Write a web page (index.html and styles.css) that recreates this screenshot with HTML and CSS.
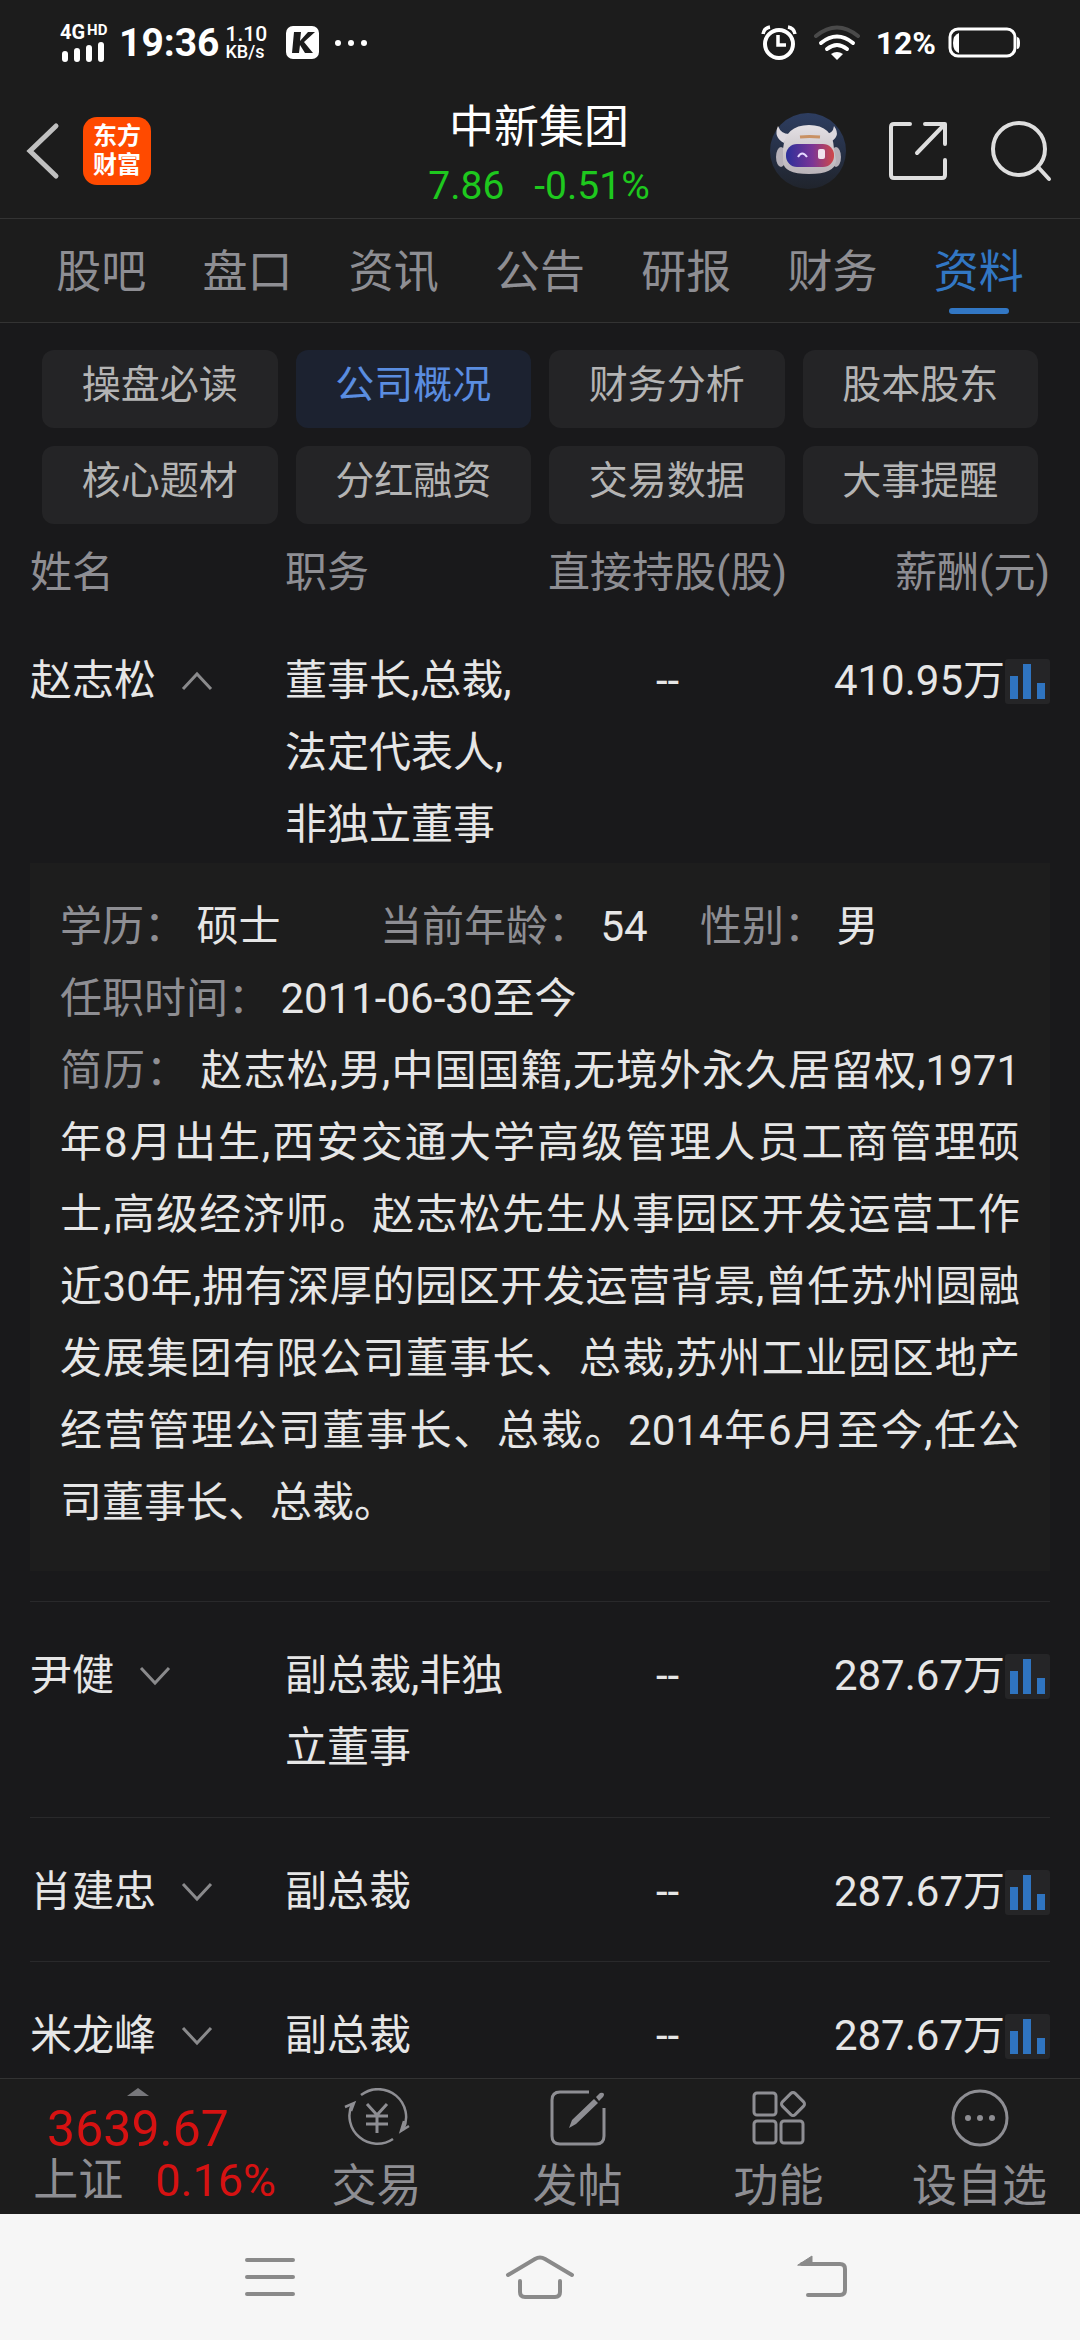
FILE: index.html
```html
<!DOCTYPE html>
<html lang="zh-CN">
<head>
<meta charset="utf-8">
<meta name="viewport" content="width=device-width, initial-scale=1">
<title>中新集团</title>
<link rel="stylesheet" href="styles.css">
</head>
<body>
<svg class="defs" aria-hidden="true">
  <symbol id="bars" viewBox="0 0 45 45">
    <rect width="45" height="45" rx="3" fill="#252527"/>
    <path d="M5 17h8v23H5zM18 5h8v35h-8zM32 24h8v16h-8z" fill="#2f74c0"/>
  </symbol>
  <symbol id="down" viewBox="0 0 32 20"><path d="M2 2l14 15L30 2" fill="none" stroke="#8a8a8c" stroke-width="3"/></symbol>
  <symbol id="up" viewBox="0 0 32 20"><path d="M2 18L16 3l14 15" fill="none" stroke="#8a8a8c" stroke-width="3"/></symbol>
</svg>
<div class="app">
  <div class="status">
    <div class="signal">
      <div class="net"><span>4G</span><span class="hd">HD</span></div>
      <svg width="44" height="20" viewBox="0 0 44 20" fill="#fff"><rect x="0" y="9" width="6" height="11" rx="3"/><rect x="12" y="6" width="6" height="14" rx="3"/><rect x="24" y="3" width="6" height="17" rx="3"/><rect x="36" y="0" width="6" height="20" rx="3"/></svg>
    </div>
    <div class="clock">19:36</div>
    <div class="speed"><span>1.10</span><span class="unit">KB/s</span></div>
    <svg class="k" width="34" height="34" viewBox="0 0 34 34"><rect width="33" height="33" rx="7" fill="#fff"/><path d="M8 6h7l-1 9 8-9h7L18 16l9 11h-8l-5-8-1 8H6z" fill="#1c1c1c"/></svg>
    <svg class="more" width="34" height="8" viewBox="0 0 34 8" fill="#fff"><circle cx="4" cy="4" r="3"/><circle cx="17" cy="4" r="3"/><circle cx="30" cy="4" r="3"/></svg>
    <div class="status-right">
      <svg width="36" height="36" viewBox="0 0 36 36" fill="none" stroke="#fff"><circle cx="18" cy="19" r="14" stroke-width="4"/><path d="M17 10v10h8" stroke-width="3.500"/><path d="M2 9q1-6 7-7M34 9q-1-6-7-7" stroke-width="3.500"/></svg>
      <svg class="wifi" width="48" height="36" viewBox="0 0 48 36" fill="none" stroke="#fff" stroke-width="4" stroke-linecap="round"><path d="M3 11q21-17 42 0" stroke="#4a4a4a"/><path d="M8 18q16-13 32 0M14 24q10-8 20 0"/><path d="M18 29q6-4 12 0l-6 6z" fill="#fff" stroke="none"/></svg>
      <div class="percent">12%</div>
      <svg width="74" height="32" viewBox="0 0 74 32"><rect x="2" y="2" width="65" height="27" rx="8" fill="none" stroke="#fff" stroke-width="3"/><path d="M11 6v20q-6-2-6-10t6-10z" fill="#fff"/><path d="M69 10q3 0 3 6t-3 6z" fill="#fff"/></svg>
    </div>
  </div>

  <header class="header">
    <div class="head-left">
      <button class="icon-btn" aria-label="返回"><svg width="34" height="58" viewBox="0 0 34 58"><path d="M30 4L4 29l26 25" fill="none" stroke="#c0c0c0" stroke-width="5" stroke-linecap="round"/></svg></button>
      <a class="logo" href="#">东方<br>财富</a>
    </div>
    <div class="head-mid">
      <h1 class="title">中新集团</h1>
      <div class="quote"><span>7.86</span><span>-0.51%</span></div>
    </div>
    <div class="head-right">
      <button class="icon-btn" aria-label="智能助手">
        <svg width="76" height="76" viewBox="0 0 76 76">
          <defs>
            <linearGradient id="night" x1="0" y1="0" x2="0" y2="1"><stop offset="0" stop-color="#2d3d60"/><stop offset="1" stop-color="#20242c"/></linearGradient>
            <linearGradient id="visor"><stop offset="0" stop-color="#2b2f9a"/><stop offset=".55" stop-color="#7a3596"/><stop offset="1" stop-color="#d04848"/></linearGradient>
            <linearGradient id="shell" x1="0" y1="0" x2="0" y2="1"><stop offset="0" stop-color="#e4e0e4"/><stop offset="1" stop-color="#b9b3b8"/></linearGradient>
          </defs>
          <circle cx="38" cy="38" r="38" fill="url(#night)"/>
          <path d="M14 30Q3 24 8 13q3 8 11 8zM58 30q14-6 6-17-1 8-9 8z" fill="#dcd8de"/>
          <ellipse cx="11" cy="44" rx="5" ry="10" fill="#b5b0b8"/><ellipse cx="66" cy="44" rx="5" ry="10" fill="#b5b0b8"/>
          <path d="M13 36Q15 12 39 12t25 24l2 12q-1 13-27 13T13 48z" fill="url(#shell)"/>
          <path d="M30 24q9-1 20 0" stroke="#c99163" stroke-width="3" fill="none"/>
          <rect x="16" y="31" width="48" height="23" rx="11" fill="url(#visor)"/>
          <path d="M28 44q4-7 9 0" fill="none" stroke="#e6d9ff" stroke-width="2"/><rect x="48" y="36" width="7" height="10" rx="2" fill="#f0e2ee"/>
        </svg>
      </button>
      <button class="icon-btn" aria-label="分享"><svg width="60" height="62" viewBox="0 0 60 62" fill="none" stroke="#dedede" stroke-width="4" stroke-linecap="round" stroke-linejoin="round"><path d="M22 4H6q-3 0-3 3v48q0 3 3 3h48q3 0 3-3V40M37 4h20v20M56 5L29 33"/></svg></button>
      <button class="icon-btn" aria-label="搜索"><svg width="62" height="62" viewBox="0 0 62 62" fill="none" stroke="#dedede" stroke-width="4" stroke-linecap="round"><circle cx="29" cy="29" r="26"/><path d="M48 47l11 12"/></svg></button>
    </div>
  </header>

  <nav class="tabs">
    <a href="#">股吧</a><a href="#">盘口</a><a href="#">资讯</a><a href="#">公告</a><a href="#">研报</a><a href="#">财务</a><a href="#" class="on">资料</a>
  </nav>

  <main class="content">
    <div class="chips">
      <button class="chip">操盘必读</button><button class="chip on">公司概况</button><button class="chip">财务分析</button><button class="chip">股本股东</button>
      <button class="chip">核心题材</button><button class="chip">分红融资</button><button class="chip">交易数据</button><button class="chip">大事提醒</button>
    </div>
    <table class="people">
      <thead>
        <tr><th>姓名</th><th>职务</th><th class="mid">直接持股(股)</th><th class="end">薪酬(元)</th></tr>
      </thead>
      <tbody>
        <tr class="open"><td><span class="cell">赵志松<svg class="arrow"><use href="#up"/></svg></span></td><td>董事长,总裁,法定代表人,非独立董事</td><td class="mid">--</td><td class="end"><span class="cell pay">410.95万<svg class="chart"><use href="#bars"/></svg></span></td></tr>
        <tr class="detail"><td colspan="4">
          <div class="card">
            <div class="facts"><span><b>学历：</b> 硕士</span><span><b>当前年龄：</b> 54</span><span><b>性别：</b> 男</span></div>
            <div><b>任职时间：</b> 2011-06-30至今</div>
            <p class="resume"><b>简历：</b> 赵志松,男,中国国籍,无境外永久居留权,1971年8月出生,西安交通大学高级管理人员工商管理硕士,高级经济师。赵志松先生从事园区开发运营工作近30年,拥有深厚的园区开发运营背景,曾任苏州圆融发展集团有限公司董事长、总裁,苏州工业园区地产经营管理公司董事长、总裁。2014年6月至今,任公司董事长、总裁。</p>
          </div>
        </td></tr>
        <tr><td><span class="cell">尹健<svg class="arrow"><use href="#down"/></svg></span></td><td>副总裁,非独立董事</td><td class="mid">--</td><td class="end"><span class="cell pay">287.67万<svg class="chart"><use href="#bars"/></svg></span></td></tr>
        <tr><td><span class="cell">肖建忠<svg class="arrow"><use href="#down"/></svg></span></td><td>副总裁</td><td class="mid">--</td><td class="end"><span class="cell pay">287.67万<svg class="chart"><use href="#bars"/></svg></span></td></tr>
        <tr><td><span class="cell">米龙峰<svg class="arrow"><use href="#down"/></svg></span></td><td>副总裁</td><td class="mid">--</td><td class="end"><span class="cell pay">287.67万<svg class="chart"><use href="#bars"/></svg></span></td></tr>
      </tbody>
    </table>
  </main>

  <footer class="toolbar">
    <a class="index" href="#">
      <svg width="22" height="8" viewBox="0 0 22 8"><path d="M0 8L11 0l11 8z" fill="#77777b"/></svg>
      <span class="points">3639.67</span>
      <span class="change"><span class="market">上证</span><span>0.16%</span></span>
    </a>
    <a class="tool" href="#"><svg width="66" height="60" viewBox="0 0 66 60" fill="none" stroke="#8e8e93" stroke-width="2.500"><path d="M17 7A28 28 0 0 1 59 42M49 51A28 28 0 0 1 8 16"/><path d="M1 19l9-4-3 8M65 38l-8 5 3-10"/><path d="M23 16l10 11 10-11M33 27v18M22 28h22M22 36h22" stroke-width="3"/></svg>交易</a>
    <a class="tool" href="#"><svg width="56" height="60" viewBox="0 0 56 60" fill="none" stroke="#8e8e93" stroke-width="3"><path d="M39 4H10q-8 0-8 8v36q0 8 8 8h36q8 0 8-8V20"/><path d="M19 40l3-8L44 11l4 4-22 21zM46 9l4-4q3-1 4 1 0 2-1 3l-4 4z" fill="#8e8e93" stroke="none"/></svg>发帖</a>
    <a class="tool" href="#"><svg width="54" height="60" viewBox="0 0 54 60" fill="none" stroke="#8e8e93" stroke-width="3"><rect x="2" y="5" width="22" height="22" rx="3"/><rect x="2" y="33" width="22" height="22" rx="3"/><rect x="29" y="33" width="22" height="22" rx="3"/><rect x="32" y="7" width="18" height="18" rx="3" transform="rotate(45 41 16)"/></svg>功能</a>
    <a class="tool" href="#"><svg width="58" height="60" viewBox="0 0 58 60"><circle cx="29" cy="30" r="27" fill="none" stroke="#8e8e93" stroke-width="3"/><g fill="#8e8e93"><circle cx="17" cy="30" r="3"/><circle cx="29" cy="30" r="3"/><circle cx="41" cy="30" r="3"/></g></svg>设自选</a>
  </footer>

  <nav class="system">
    <button class="icon-btn" aria-label="菜单"><svg width="52" height="44" viewBox="0 0 52 44" stroke="#8a8a8a" stroke-width="4" stroke-linecap="round"><path d="M3 5h46M3 22h46M3 39h46"/></svg></button>
    <button class="icon-btn" aria-label="主页"><svg width="72" height="44" viewBox="0 0 72 44" fill="none" stroke="#8a8a8a" stroke-width="4" stroke-linecap="round"><path d="M4 20L31 4q5-3 10 0l27 16M16 26v11q0 5 5 5h30q5 0 5-5V26"/></svg></button>
    <button class="icon-btn" aria-label="后退"><svg width="78" height="44" viewBox="0 0 78 44" fill="none" stroke="#8a8a8a" stroke-width="4" stroke-linecap="round"><path d="M31 9h38q5 0 5 5v21q0 5-5 5H37"/><path d="M27 10l14-9v9z" fill="#8a8a8a" stroke-width="1"/></svg></button>
  </nav>
</div>
</body>
</html>
```
FILE: styles.css
```css
* { box-sizing: border-box; }

body {
  margin: 0;
  background: #19191b;
  color: #e6e6e6;
  font-family: Roboto, "Noto Sans CJK SC", sans-serif;
  font-size: 42px;
}

a { color: inherit; text-decoration: none; }
svg { display: block; flex: none; }
.defs { position: absolute; width: 0; height: 0; }
.icon-btn { display: block; padding: 0; border: 0; background: none; }

.app { display: flex; flex-direction: column; height: 100vh; overflow: hidden; }

/* status bar */
.status {
  display: flex;
  align-items: center;
  flex: none;
  height: 84px;
  padding: 2px 58px 0 60px;
  background: #1c1c1c;
  color: #fff;
  font-weight: 700;
}
.signal { display: flex; flex-direction: column; gap: 1px; width: 59px; }
.signal svg { margin-left: 2px; }
.net { display: flex; gap: 2px; font-size: 20px; line-height: 17px; }
.hd { font-size: 15px; line-height: 12px; }
.clock { font-size: 39px; line-height: 40px; }
.speed { display: flex; flex-direction: column; width: 50px; margin-left: 6px; font-size: 21px; line-height: 18px; font-weight: 500; }
.unit { font-size: 18px; }
.k { margin-left: 10px; }
.more { margin-left: 14px; }
.status-right { display: flex; align-items: center; margin-left: auto; }
.wifi { margin: 0 15px 0 16px; }
.percent { margin-right: 12px; font-size: 32px; }

/* stock header */
.header {
  display: grid;
  grid-template-columns: 1fr auto 1fr;
  align-items: center;
  flex: none;
  height: 135px;
  padding: 0 28px 0 26px;
  border-bottom: 1px solid #333;
  background: #1c1c1c;
}
.head-left { display: flex; align-items: center; gap: 23px; }
.logo {
  display: grid;
  place-content: center;
  width: 68px;
  height: 68px;
  border-radius: 14px;
  background: #ff4a00;
  color: #fff;
  font-size: 24px;
  font-weight: 700;
  line-height: 29px;
}
.head-mid { padding-top: 10px; text-align: center; }
.title { margin: 0; color: #fff; font-size: 45px; font-weight: 400; line-height: 60px; }
.quote { display: flex; justify-content: center; gap: 30px; color: #1ec81e; font-size: 39px; line-height: 56px; }
.head-right { display: flex; align-items: center; justify-content: flex-end; gap: 42px; }

.tabs {
  display: flex;
  flex: none;
  padding: 4px 28px 0;
  border-bottom: 1px solid #333;
  background: #1c1c1c;
  color: #8e8e93;
  font-size: 45px;
  line-height: 99px;
}
.tabs a { flex: 1; text-align: center; }
.tabs .on { position: relative; color: #3277c4; }
.tabs .on::after {
  content: "";
  position: absolute;
  bottom: 8px;
  left: 50%;
  width: 60px;
  height: 6px;
  margin-left: -30px;
  border-radius: 3px;
  background: #3277c4;
}

.content { flex: 1; min-height: 0; overflow: hidden auto; scrollbar-width: none; }

.chips { display: grid; grid-template-columns: repeat(4, 1fr); gap: 18px; padding: 27px 42px 13px; }
.chip {
  height: 78px;
  padding: 0 0 8px;
  border: 0;
  border-radius: 12px;
  background: #242426;
  color: #b4b4b4;
  font: inherit;
  font-size: 39px;
  line-height: 70px;
}
.chip.on { background: #1c2230; color: #5a8de0; }

/* executives */
.people { width: calc(100% - 60px); margin: 0 30px; border-collapse: collapse; table-layout: fixed; line-height: 72px; }
.people th { padding: 0; color: #8e8e93; font-weight: 400; text-align: left; }
.people td { padding: 38px 0 33px; border-bottom: 1px solid #29292b; vertical-align: top; }
.people .mid { text-align: center; }
.people .end { text-align: right; }
.people .open td { padding: 36px 0 2px; border: 0; }
.people .detail td { padding: 0 0 30px; }
.cell { display: flex; align-items: center; }
.pay { justify-content: flex-end; }
.arrow { width: 32px; height: 20px; margin-left: 25px; }
.chart { width: 45px; height: 45px; }

.card { padding: 28px 30px 32px; background: #1d1d1d; }
.card b { color: #8e8e93; font-weight: 400; }
.facts { display: grid; grid-template-columns: repeat(3, 1fr); }
.resume { margin: 0; text-align: justify; }

/* bottom toolbar */
.toolbar {
  display: flex;
  flex: none;
  height: 136px;
  border-top: 1px solid #333;
  background: #1c1c1c;
  color: #8e8e93;
  font-size: 45px;
}
.index { display: flex; flex-direction: column; align-items: center; width: 276px; padding-top: 9px; color: #d61212; }
.points { font-size: 50px; line-height: 66px; }
.change { display: flex; align-self: flex-end; gap: 32px; line-height: 38px; }
.market { color: #8e8e93; }
.tool { display: flex; flex: 1; flex-direction: column; align-items: center; padding-top: 9px; line-height: 78px; }

.system {
  display: grid;
  grid-template-columns: repeat(3, 1fr);
  place-items: center;
  flex: none;
  height: 126px;
  padding: 0 135px;
  background: #f6f6f6;
}
```
